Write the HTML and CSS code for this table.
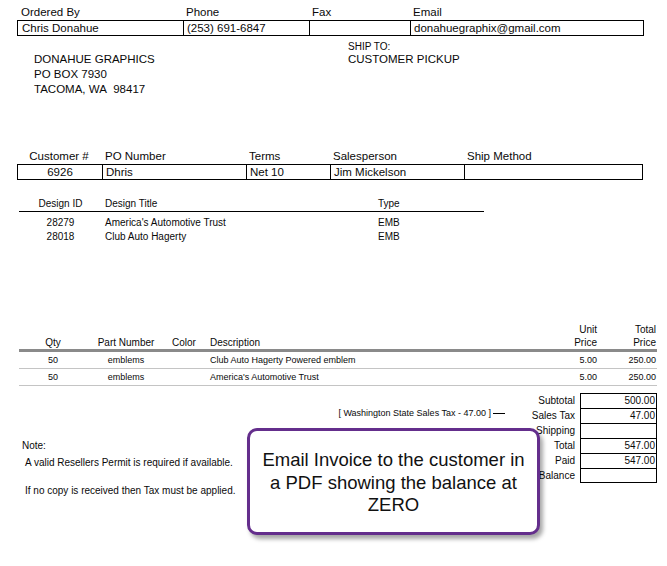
FILE: index.html
```html
<!DOCTYPE html>
<html>
<head>
<meta charset="utf-8">
<link rel="stylesheet" href="styles.css">
</head>
<body>
<div class="page">
  <section class="order">
    <div class="grid4 labels"><span>Ordered By</span><span>Phone</span><span>Fax</span><span>Email</span></div>
    <div class="grid4 cells"><span>Chris Donahue</span><span>(253) 691-6847</span><span></span><span>donahuegraphix@gmail.com</span></div>
  </section>

  <section class="addr">
    <div class="bill">DONAHUE GRAPHICS<br>PO BOX 7930<br>TACOMA, WA&nbsp; 98417</div>
    <div class="ship">
      <div class="ship-label">SHIP TO:</div>
      <div class="ship-name">CUSTOMER PICKUP</div>
    </div>
  </section>

  <section class="cust">
    <div class="grid5 labels"><span class="c">Customer #</span><span>PO Number</span><span>Terms</span><span>Salesperson</span><span>Ship Method</span></div>
    <div class="grid5 cells"><span class="c">6926</span><span>Dhris</span><span>Net 10</span><span>Jim Mickelson</span><span></span></div>
  </section>

  <section class="designs">
    <div class="dgrid dhead"><span class="c">Design ID</span><span>Design Title</span><span>Type</span></div>
    <div class="drows">
      <div class="dgrid"><span class="c">28279</span><span>America's Automotive Trust</span><span>EMB</span></div>
      <div class="dgrid"><span class="c">28018</span><span>Club Auto Hagerty</span><span>EMB</span></div>
    </div>
  </section>

  <section class="items">
    <div class="igrid ihead">
      <span class="c">Qty</span><span class="c">Part Number</span><span class="color">Color</span><span class="desc">Description</span><span class="r">Unit<br>Price</span><span class="r">Total<br>Price</span>
    </div>
    <div class="igrid irow">
      <span class="c">50</span><span class="c">emblems</span><span></span><span class="desc">Club Auto Hagerty Powered emblem</span><span class="r">5.00</span><span class="r">250.00</span>
    </div>
    <div class="igrid irow">
      <span class="c">50</span><span class="c">emblems</span><span></span><span class="desc">America's Automotive Trust</span><span class="r">5.00</span><span class="r">250.00</span>
    </div>
  </section>

  <section class="bottom">
    <div class="left">
      <div class="taxline">[ Washington State Sales Tax - 47.00 ]<span class="dash"></span></div>
      <div class="note">
        <div>Note:</div>
        <div class="note-line">A valid Resellers Permit is required if available.</div>
        <div class="note-line gap">If no copy is received then Tax must be applied.</div>
      </div>
    </div>
    <div class="totals">
      <span class="tl">Subtotal</span><span class="tv">500.00</span>
      <span class="tl">Sales Tax</span><span class="tv">47.00</span>
      <span class="tl">Shipping</span><span class="tv"></span>
      <span class="tl">Total</span><span class="tv">547.00</span>
      <span class="tl">Paid</span><span class="tv">547.00</span>
      <span class="tl">Balance</span><span class="tv last"></span>
    </div>
  </section>

  <div class="callout">Email Invoice to the customer in<br>a PDF showing the balance at<br>ZERO</div>
</div>
</body>
</html>
```

FILE: styles.css
```css
html, body {
  margin: 0;
  padding: 0;
  background: #fff;
}
body {
  font-family: "Liberation Sans", Arial, sans-serif;
  color: #0a0a0a;
}
.page {
  position: relative;
  width: 667px;
  height: 566px;
  padding-top: 6px;
  box-sizing: border-box;
  overflow: hidden;
}
.c { text-align: center; }
.r { text-align: right; }

/* Ordered-by table */
.order {
  margin-left: 17px;
  width: 627px;
  font-size: 11.5px;
}
.grid4 {
  display: grid;
  grid-template-columns: 165px 126px 101px 1fr;
}
.labels {
  line-height: 13px;
  margin-bottom: 1px;
  white-space: nowrap;
}
.labels span { padding-left: 4px; }
.cells {
  border: 1px solid #000;
  line-height: 14px;
  height: 14px;
  white-space: nowrap;
}
.cells span {
  padding-left: 3px;
  border-left: 1px solid #000;
}
.cells span:first-child {
  border-left: none;
  padding-left: 4px;
}

/* Address */
.addr {
  display: flex;
  padding-top: 6px;
  font-size: 11.5px;
}
.bill {
  margin-left: 34px;
  width: 314px;
  padding-top: 10px;
  line-height: 15px;
}
.ship-label {
  font-size: 10px;
  line-height: 10px;
}
.ship-name { line-height: 15px; }

/* Customer table */
.cust {
  margin: 53px 0 0 17px;
  width: 626px;
  font-size: 11.5px;
}
.grid5 {
  display: grid;
  grid-template-columns: 84px 144px 84px 134px 1fr;
}
.cust .labels span.c,
.cust .cells span.c { padding-left: 0; }

/* Design table */
.designs {
  margin: 17px 0 0 19px;
  width: 465px;
  font-size: 10px;
}
.dgrid {
  display: grid;
  grid-template-columns: 83px 273px 1fr;
  line-height: 14px;
}
.dgrid span:not(.c) { padding-left: 3px; }
.dhead {
  line-height: 13px;
  padding-bottom: 1px;
  border-bottom: 1px solid #000;
}
.drows { padding-top: 4px; }

/* Line items */
.items {
  margin: 79px 0 0 19px;
  width: 638px;
}
.igrid {
  display: grid;
  grid-template-columns: 68px 78px 41px 1fr 60px 57px;
}
.ihead {
  font-size: 10px;
  line-height: 13px;
  align-items: end;
  border-bottom: 3px solid #8a8a8a;
}
.ihead .r { padding-right: 3px; }
.ihead span:last-child { padding-right: 1px; }
.color { padding-left: 7px; }
.desc { padding-left: 4px; }
.irow {
  font-size: 9px;
  height: 16px;
  line-height: 16px;
  border-bottom: 1px solid #c4c4c4;
}
.irow .r { padding-right: 3px; }
.irow span:last-child { padding-right: 1px; }

/* Bottom */
.bottom {
  display: flex;
  margin-top: 7px;
}
.left { width: 507px; }
.taxline {
  margin-top: 15px;
  font-size: 9px;
  line-height: 11px;
  text-align: right;
  padding-right: 2px;
  white-space: nowrap;
}
.dash {
  display: inline-block;
  width: 12px;
  height: 1px;
  background: #000;
  vertical-align: middle;
  margin-left: 2px;
}
.note {
  margin: 21px 0 0 22px;
  font-size: 10px;
  line-height: 12px;
}
.note-line {
  margin-top: 5px;
  padding-left: 3px;
}
.note-line.gap { margin-top: 16px; }

.totals {
  display: grid;
  grid-template-columns: 70px 77px;
  grid-auto-rows: 15px;
  column-gap: 3px;
  font-size: 10px;
  align-self: flex-start;
}
.tl {
  text-align: right;
  padding-right: 2px;
  line-height: 15px;
}
.tv {
  border: 1px solid #000;
  border-bottom: none;
  text-align: right;
  padding-right: 1px;
  line-height: 14px;
}
.tv.last { border-bottom: 1px solid #000; }

/* Callout overlay */
.callout {
  position: absolute;
  left: 247px;
  top: 428px;
  width: 293px;
  height: 107px;
  box-sizing: border-box;
  border: 3px solid #642e8c;
  border-radius: 10px;
  background: #fff;
  box-shadow: 3px 4px 4px rgba(0, 0, 0, 0.35);
  padding-top: 18px;
  text-align: center;
  font-size: 18.5px;
  line-height: 22.5px;
  color: #111;
}
```
